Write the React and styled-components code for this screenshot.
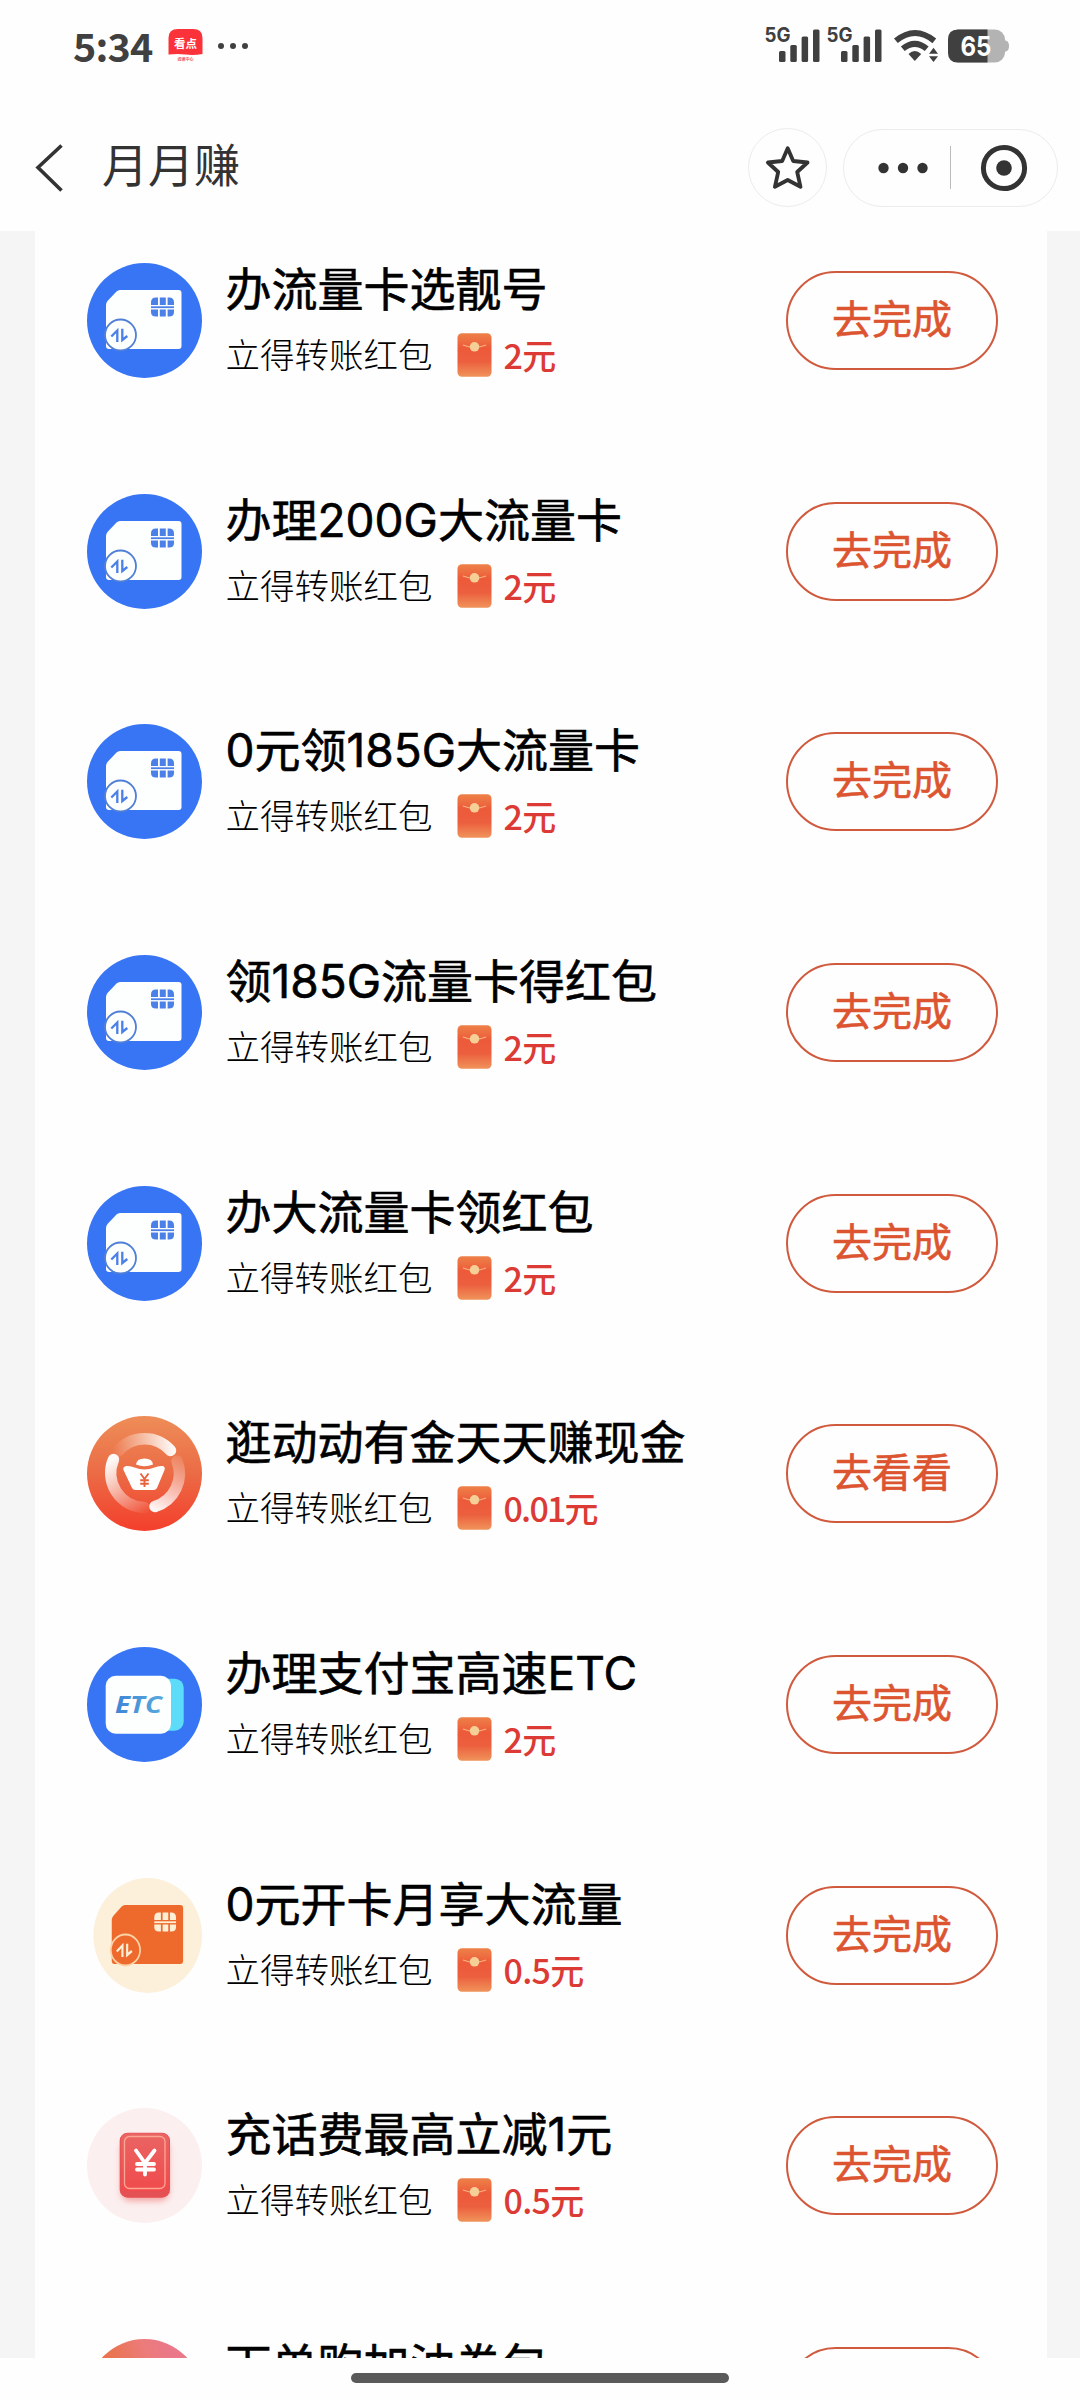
import React from 'react';
import styled, { createGlobalStyle } from 'styled-components';

const GlobalStyle = createGlobalStyle`
    * {
        box-sizing: border-box;
    }
    body {
        margin: 0;
        background: #fefefe;
        font-family: Inter, "Noto Sans CJK SC", sans-serif;
    }
    svg {
        display: block;
        flex: none;
    }
`;

const Screen = styled.div`
    width: 1080px;
    height: 2400px;
    display: flex;
    flex-direction: column;
    overflow: hidden;
`;

const StatusBar = styled.div`
    height: 104px;
    flex: none;
    display: flex;
    align-items: flex-start;
    justify-content: space-between;
    padding: 20px 70px 0 73px;
    color: #404040;
`;

const StatusGroup = styled.div`
    display: flex;
    align-items: center;
    height: 52px;
`;

const Clock = styled.div`
    width: 95px;
    padding-bottom: 2px;
    font-family: "Noto Sans CJK SC", sans-serif;
    font-size: 39.5px;
    font-weight: 700;
    line-height: 50px;
    letter-spacing: -0.8px;
`;

const NavBar = styled.div`
    height: 127px;
    flex: none;
    display: flex;
    align-items: center;
    padding: 0 22px 0 35px;
    color: #333;
`;

const NavTitle = styled.div`
    flex: 1;
    padding: 0 0 6px 37px;
    font-size: 46px;
    line-height: 60px;
`;

const RoundButton = styled.div`
    width: 79px;
    height: 79px;
    margin-right: 16px;
    border: 1px solid #ececec;
    border-radius: 50%;
    display: flex;
    align-items: center;
    justify-content: center;
`;

const Capsule = styled.div`
    width: 215px;
    height: 78px;
    border: 1px solid #ececec;
    border-radius: 39px;
    display: flex;
    align-items: center;
    padding-left: 34px;
`;

const Divider = styled.div`
    width: 1px;
    height: 43px;
    margin: 0 29px 0 22px;
    background: #bbb;
`;

const Scroller = styled.div`
    height: 2127px;
    flex: none;
    overflow: hidden;
    background: #f5f5f5;
    padding: 0 33px 0 35px;
`;

const Panel = styled.div`
    height: 100%;
    background: #fefefe;
    overflow: hidden;
`;

const TaskList = styled.div`
    margin-top: -25.8px;
`;

const TaskRow = styled.div`
    height: 230.67px;
    display: flex;
    align-items: center;
    padding: 0 49px 0 52px;
`;

const TaskText = styled.div`
    flex: 1;
    padding-left: 23.5px;
    padding-bottom: 4px;
    white-space: nowrap;
`;

const TaskTitle = styled.div`
    color: #000;
    font-size: 46px;
    font-weight: 400;
    -webkit-text-stroke: 0.6px #000;
    line-height: 60px;
`;

const RewardLine = styled.div`
    display: flex;
    align-items: center;
    height: 46px;
    margin-top: 13px;
`;

const RewardLabel = styled.div`
    width: 231px;
    padding-top: 2px;
    color: #000;
    font-size: 34.5px;
    font-weight: 300;
    line-height: 46px;
`;

const Amount = styled.div`
    margin-left: 12px;
    color: #dc3b35;
    font-family: "Noto Sans CJK SC", sans-serif;
    font-size: 34px;
    font-weight: 500;
    line-height: 46px;
    letter-spacing: ${props => (props.$tight ? '-1.8px' : '-0.7px')};
`;

const ActionButton = styled.div`
    width: 212px;
    height: 99px;
    border: 2px solid #d05a3d;
    border-radius: 50px;
    color: #dc5530;
    font-size: 40px;
    font-weight: 400;
    -webkit-text-stroke: 0.6px #dc5530;
    line-height: 93px;
    text-align: center;
`;

const BottomBar = styled.div`
    flex: 1;
    display: flex;
    justify-content: center;
    padding-top: 15px;
`;

const HomeHandle = styled.div`
    width: 378px;
    height: 10px;
    border-radius: 5px;
    background: #5a5a5a;
`;

const NewsBadge = () => (
    <svg width="35" height="36" viewBox="0 0 35 36">
        <path d="M0.5 26V10Q0.5 1 10 1h15q9.500 0 9.500 9v16q-9 1.500-17 .5t-17 0z" fill="#fb3239" />
        <text x="17.500" y="20" fontSize="11.500" fontWeight="700" fill="#fff" textAnchor="middle">看点</text>
        <text x="17.500" y="32.500" fontSize="4" fontWeight="700" fill="#f0555a" textAnchor="middle">阅读中心</text>
    </svg>
);

const StatusDots = () => (
    <svg width="46" height="36" viewBox="-14 0 46 36">
        {[4, 16, 28].map(x => <circle key={x} cx={x} cy="18" r="3" fill="#404040" />)}
    </svg>
);

const Signal = () => (
    <svg width="62" height="48" viewBox="0 0 62 48">
        <text x="-0.500" y="20" fontSize="20" fontWeight="700" fill="#404040" textLength="26" lengthAdjust="spacingAndGlyphs">5G</text>
        <g fill="#404040">
            <rect x="14" y="29" width="6.500" height="11" rx="1.500" />
            <rect x="25.300" y="23" width="6.500" height="17" rx="1.500" />
            <rect x="36.600" y="14.500" width="6.500" height="25.500" rx="1.500" />
            <rect x="48" y="7.500" width="6.500" height="32.500" rx="1.500" />
        </g>
    </svg>
);

const Wifi = () => (
    <svg width="59" height="36" viewBox="-4.500 0 59 36">
        <g fill="none" stroke="#404040" strokeWidth="6">
            <path d="M2.400 12.800Q21.500 -2.800 40.800 12.800" />
            <path d="M9.300 20.800Q21.300 10.800 33.200 20.800" />
        </g>
        <path d="M15 26Q21.300 20 27.700 26L21.300 33z" fill="#404040" />
        <path d="M35.500 25.800l4.500-6L44.500 25.800zM35.500 28.200H44.500L40 34z" fill="#404040" />
    </svg>
);

const Battery = () => (
    <svg width="62" height="34" viewBox="0 0 62 34">
        <rect x="0" y="0.500" width="57" height="33" rx="10" fill="#b3b3b3" />
        <path d="M57 11.500h1q3 1 3 5.500t-3 5.500h-1z" fill="#b3b3b3" />
        <path d="M10 .5h29.500v33H10q-10 0-10-10v-13q0-10 10-10z" fill="#404040" />
        <text x="28" y="27" fontSize="27" fontWeight="700" fill="#fff" textAnchor="middle" textLength="31" lengthAdjust="spacingAndGlyphs">65</text>
    </svg>
);

const BackArrow = () => (
    <svg width="30" height="50" viewBox="0 0 30 50">
        <path d="M26.500 2.500L3 24.500L26.500 47.500" fill="none" stroke="#333" strokeWidth="3.600" />
    </svg>
);

const Star = () => (
    <svg width="46" height="46" viewBox="0 0 46 46">
        <path
            d="M22.700 3.200L28.200 16L42.500 17.500L32.200 27L35.500 41.800L22.700 35L9.900 41.800L13.200 27L2.900 17.500L17.200 16z"
            fill="none"
            stroke="#333"
            strokeWidth="3.800"
            strokeLinejoin="round"
        />
    </svg>
);

const MoreDots = () => (
    <svg width="50" height="12" viewBox="0 0 50 12">
        {[5.5, 25, 44.5].map(x => <circle key={x} cx={x} cy="6" r="5.200" fill="#333" />)}
    </svg>
);

const Target = () => (
    <svg width="48" height="48" viewBox="0 0 48 48">
        <circle cx="24" cy="24" r="20.600" fill="none" stroke="#333" strokeWidth="5" />
        <circle cx="24" cy="24" r="7.800" fill="#333" />
    </svg>
);

// the card drawing shared by the blue and the orange SIM icons
const SimCard = ({ card, ink, ring }) => (
    <g>
        <path d="M33 27H91.500q3 0 3 3V83q0 3-3 3H22q-3 0-3-3V42q0-2 1.500-4L29.500 28.500q1.500-1.500 3.500-1.500z" fill={card} />
        <g fill={ink}>
            <path d="M69 34.500h2v7.500h-7v-2.500q0-5 5-5zM72.800 34.500h6v7.500h-6zM80.600 34.500h1.400q5 0 5 5v2.500h-6.400z" />
            <rect x="64" y="43.300" width="23" height="1.800" />
            <path d="M64 46.500h7v7h-2q-5 0-5-4.500zM72.800 46.500h6v7h-6zM80.600 46.500h6.400v2.500q0 4.500-5 4.500h-1.400z" />
        </g>
        <circle cx="33.500" cy="72" r="15.500" fill={card} stroke={ring} strokeWidth="1.800" />
        <path d="M24.300 73.500L30.300 67.500V79M35.300 65.800V77L40.300 73" fill="none" stroke={ink} strokeWidth="2.300" />
    </g>
);

const BlueSimIcon = () => (
    <svg width="115" height="115" viewBox="0 0 115 115">
        <circle cx="57.500" cy="57.500" r="57.500" fill="#3875f5" />
        <SimCard card="#fdfefe" ink="#4a80e8" ring="#4f7fd6" />
    </svg>
);

const OrangeSimIcon = () => (
    <svg width="115" height="115" viewBox="0 0 115 115">
        <ellipse cx="60.700" cy="57.500" rx="54.300" ry="57.500" fill="#fcf0db" />
        <g transform="translate(6.800 0) scale(0.945 1)">
            <SimCard card="#ee6a2c" ink="#fdeed6" ring="#fbd3a8" />
        </g>
    </svg>
);

const IngotIcon = () => (
    <svg width="115" height="115" viewBox="0 0 115 115">
        <defs>
            <linearGradient id="ingotBg" x1="0" y1="0" x2="0" y2="1">
                <stop offset="0" stopColor="#ee8d58" />
                <stop offset="0.500" stopColor="#eb6b45" />
                <stop offset="1" stopColor="#f43f2c" />
            </linearGradient>
            <linearGradient id="arcTop" gradientUnits="userSpaceOnUse" x1="26" y1="36" x2="86" y2="34">
                <stop offset="0" stopColor="#fff" stopOpacity="0" />
                <stop offset="1" stopColor="#fff" stopOpacity="0.950" />
            </linearGradient>
            <linearGradient id="arcLeft" gradientUnits="userSpaceOnUse" x1="26" y1="44" x2="60" y2="94">
                <stop offset="0" stopColor="#fff" stopOpacity="0.950" />
                <stop offset="1" stopColor="#fff" stopOpacity="0.050" />
            </linearGradient>
            <linearGradient id="arcRight" gradientUnits="userSpaceOnUse" x1="68" y1="94" x2="92" y2="40">
                <stop offset="0" stopColor="#fff" stopOpacity="0.950" />
                <stop offset="1" stopColor="#fff" stopOpacity="0.100" />
            </linearGradient>
        </defs>
        <circle cx="57.500" cy="57.500" r="57.500" fill="url(#ingotBg)" />
        <g fill="none" strokeWidth="11.500" strokeLinecap="round">
            <path d="M31 35A34.500 34.500 0 0 1 83.500 34.500" stroke="url(#arcTop)" />
            <path d="M26.500 43.500A34.500 34.500 0 0 0 57 91.500" stroke="url(#arcLeft)" />
            <path d="M68 90.500A34.500 34.500 0 0 0 90 45" stroke="url(#arcRight)" />
        </g>
        <path d="M49 48.500Q49.500 42.500 57.500 42.500T66 48.500Q57.500 52 49 48.500z" fill="#fff" />
        <path d="M39 50q4.500-.5 8.500 1.500q10 4 20 0q4-2 8.500-1.500q2.500 1 1.500 4L70 72q-1 2-3.500 2h-18q-2.500 0-3.500-2L36.500 54q-1-3 2.500-4z" fill="#fff" />
        <path d="M53.500 57.500l4 5.500l4-5.500M57.500 63v8M53.200 64.200h8.600M53.200 67.700h8.600" fill="none" stroke="#e8623c" strokeWidth="1.900" />
    </svg>
);

const EtcIcon = () => (
    <svg width="115" height="115" viewBox="0 0 115 115">
        <defs>
            <linearGradient id="etcInk" x1="0" y1="0" x2="1" y2="0">
                <stop offset="0" stopColor="#3f86d6" />
                <stop offset="1" stopColor="#58aadb" />
            </linearGradient>
        </defs>
        <circle cx="57.500" cy="57.500" r="57.500" fill="#3875f5" />
        <rect x="68" y="31.700" width="28.700" height="52" rx="9" fill="#5cdcf8" />
        <rect x="18.700" y="28.700" width="65.300" height="58" rx="10" fill="#fdfefe" />
        <text x="28" y="66" fontFamily="Open Sans" fontSize="24" fontWeight="700" fontStyle="italic" fill="url(#etcInk)" textLength="47" lengthAdjust="spacingAndGlyphs">ETC</text>
    </svg>
);

const PhoneBillIcon = () => (
    <svg width="115" height="115" viewBox="0 0 115 115">
        <defs>
            <linearGradient id="billFace" x1="0" y1="0" x2="0" y2="1">
                <stop offset="0" stopColor="#ea6564" />
                <stop offset="1" stopColor="#f04a4c" />
            </linearGradient>
            <filter id="billShadow" x="-30%" y="-30%" width="160%" height="160%">
                <feGaussianBlur stdDeviation="3" />
            </filter>
        </defs>
        <circle cx="57.500" cy="57.500" r="57.500" fill="#fcefef" />
        <rect x="34" y="32" width="48" height="61" rx="9" fill="#f3a3a3" filter="url(#billShadow)" />
        <rect x="32.700" y="24.700" width="50.300" height="65" rx="8" fill="#e45053" />
        <rect x="33.700" y="25.200" width="48.300" height="58" rx="7" fill="url(#billFace)" />
        <rect x="37.500" y="28.500" width="40.500" height="52" rx="5" fill="none" stroke="#fba794" strokeWidth="1.300" />
        <path d="M49 42.500L58 55L67.500 42.500M58 55V66.500M50 56h17M50 61.500h17" fill="none" stroke="#fff" strokeWidth="3.800" strokeLinecap="round" />
    </svg>
);

const FuelIcon = () => (
    <svg width="115" height="115" viewBox="0 0 115 115">
        <defs>
            <linearGradient id="fuelBg" gradientUnits="userSpaceOnUse" x1="26" y1="24" x2="80" y2="6">
                <stop offset="0" stopColor="#e9744f" />
                <stop offset="0.600" stopColor="#ec7b7a" />
                <stop offset="1" stopColor="#ea7889" />
            </linearGradient>
        </defs>
        <circle cx="57.500" cy="57.500" r="57.500" fill="url(#fuelBg)" />
    </svg>
);

const Envelope = () => (
    <svg width="35" height="44" viewBox="0 0 35 44">
        <defs>
            <linearGradient id="envelopeBody" x1="0" y1="0" x2="0" y2="1">
                <stop offset="0" stopColor="#ee8148" />
                <stop offset="0.350" stopColor="#ec5a3a" />
                <stop offset="0.650" stopColor="#ec5f3e" />
                <stop offset="1" stopColor="#f0935a" />
            </linearGradient>
        </defs>
        <rect x="0.500" y="0.300" width="34" height="43.400" rx="4.500" fill="url(#envelopeBody)" />
        <path d="M6 12Q17.500 16.500 29 12" fill="none" stroke="#f7b183" strokeWidth="1.100" />
        <circle cx="17.500" cy="13.800" r="4.800" fill="#f6cf96" />
    </svg>
);

const tasks = [
    { title: '办流量卡选靓号', amount: '2元', action: '去完成', Icon: BlueSimIcon },
    { title: '办理200G大流量卡', amount: '2元', action: '去完成', Icon: BlueSimIcon },
    { title: '0元领185G大流量卡', amount: '2元', action: '去完成', Icon: BlueSimIcon },
    { title: '领185G流量卡得红包', amount: '2元', action: '去完成', Icon: BlueSimIcon },
    { title: '办大流量卡领红包', amount: '2元', action: '去完成', Icon: BlueSimIcon },
    { title: '逛动动有金天天赚现金', amount: '0.01元', action: '去看看', Icon: IngotIcon },
    { title: '办理支付宝高速ETC', amount: '2元', action: '去完成', Icon: EtcIcon },
    { title: '0元开卡月享大流量', amount: '0.5元', action: '去完成', Icon: OrangeSimIcon },
    { title: '充话费最高立减1元', amount: '0.5元', action: '去完成', Icon: PhoneBillIcon },
    { title: '下单购加油券包', amount: '2元', action: '去完成', Icon: FuelIcon },
];

const Task = ({ task }) => {
    const { Icon, title, amount, action } = task;

    return (
        <TaskRow>
            <Icon />
            <TaskText>
                <TaskTitle>{title}</TaskTitle>
                <RewardLine>
                    <RewardLabel>立得转账红包</RewardLabel>
                    <Envelope />
                    <Amount $tight={amount.length > 4}>{amount}</Amount>
                </RewardLine>
            </TaskText>
            <ActionButton>{action}</ActionButton>
        </TaskRow>
    );
}

const App = () => (
    <Screen>
        <GlobalStyle />
        <StatusBar>
            <StatusGroup>
                <Clock>5:34</Clock>
                <NewsBadge />
                <StatusDots />
            </StatusGroup>
            <StatusGroup>
                <Signal />
                <Signal />
                <Wifi />
                <Battery />
            </StatusGroup>
        </StatusBar>
        <NavBar>
            <BackArrow />
            <NavTitle>月月赚</NavTitle>
            <RoundButton><Star /></RoundButton>
            <Capsule>
                <MoreDots />
                <Divider />
                <Target />
            </Capsule>
        </NavBar>
        <Scroller>
            <Panel>
                <TaskList>
                    {tasks.map(task => <Task key={task.title} task={task} />)}
                </TaskList>
            </Panel>
        </Scroller>
        <BottomBar>
            <HomeHandle />
        </BottomBar>
    </Screen>
);

export default App;
